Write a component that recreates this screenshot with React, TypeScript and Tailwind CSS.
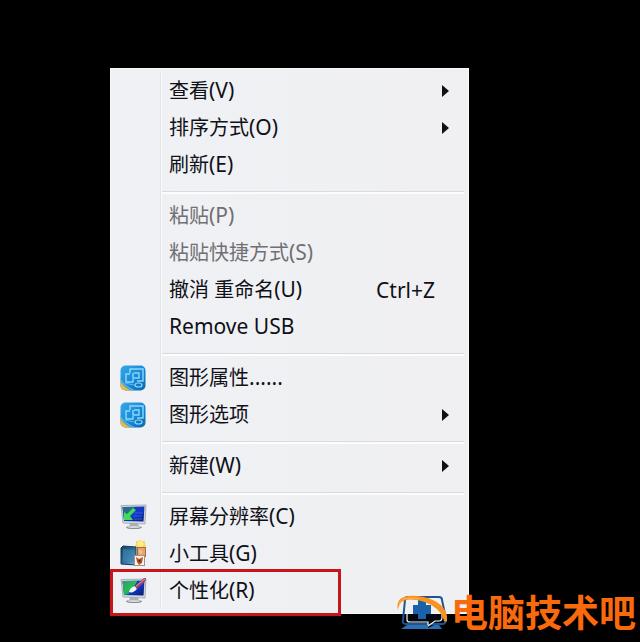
import type { ReactNode } from "react";

type MenuItem = {
  label: string;
  accessKey?: string;
  icon?: ReactNode;
  shortcut?: string;
  submenu?: boolean;
  disabled?: boolean;
  highlighted?: boolean;
};

const GraphicsIcon = () => (
  <svg viewBox="0 0 26 26" className="size-[26px]" aria-hidden="true">
    <defs>
      <linearGradient id="graphicsBlue" x1="0" y1="0" x2="1" y2="1">
        <stop offset="0" stopColor="#3aa9e6" />
        <stop offset="0.55" stopColor="#1489da" />
        <stop offset="1" stopColor="#0a66ad" />
      </linearGradient>
      <clipPath id="graphicsClip">
        <rect x="0.5" y="0.5" width="25" height="25" rx="5" />
      </clipPath>
    </defs>
    <g clipPath="url(#graphicsClip)">
      <rect width="26" height="26" fill="url(#graphicsBlue)" />
      <path d="M0 15C2 20 6 23 12 26H0Z" fill="#e9b948" />
      <path d="M0 14C3 20 8 23 15 26" fill="none" stroke="#5fb4e4" strokeWidth="1.5" />
    </g>
    <g fill="none" stroke="#8fd8f8" strokeWidth="1.4">
      <path d="M10 8V4H23V16H17" />
      <path d="M14 8H19V13H13V8M10 9H6V17H13V14" />
      <path d="M5 18L14 20" stroke="#5fb8ea" strokeWidth="1.2" />
      <ellipse cx="18.500" cy="20" rx="3.5" ry="2" strokeWidth="1.2" />
    </g>
  </svg>
);

const Monitor = ({ children }: { children: ReactNode }) => (
  <svg viewBox="0 0 27 27" className="size-[27px]" aria-hidden="true">
    <defs>
      <linearGradient id="screenBlue" x1="0" y1="0" x2="1" y2="1">
        <stop offset="0" stopColor="#1a3a9e" />
        <stop offset="0.55" stopColor="#1537c8" />
        <stop offset="1" stopColor="#071b70" />
      </linearGradient>
      <linearGradient id="screenGreen" x1="0" y1="0" x2="1" y2="1">
        <stop offset="0" stopColor="#3a8f86" />
        <stop offset="0.5" stopColor="#22c04d" />
        <stop offset="1" stopColor="#1452a8" />
      </linearGradient>
    </defs>
    <path d="M10 20H18L19 24H9Z" fill="#aab0b5" />
    <ellipse cx="14" cy="24.5" rx="8" ry="1.6" fill="#888f95" />
    <ellipse cx="14" cy="24" rx="6.5" ry="1" fill="#d5d9db" />
    <path d="M1 2.5L26 2L25 21L3 20Z" fill="#d3d8dd" stroke="#9da4ab" strokeWidth="0.8" />
    {children}
  </svg>
);

const ResolutionIcon = () => (
  <Monitor>
    <path d="M2.5 4L24.5 3.5L23.5 18.5L4 18Z" fill="url(#screenBlue)" />
    <path d="M2.5 4H15L4 16Z" fill="#2a6a8c" />
    <path d="M4 9L7 11L13 5L16 7L10 13L13 17L4 17Z" fill="#3fdc5a" />
    <path d="M14 10H23M13 13H22M14 16H22" stroke="#2d5fe6" />
  </Monitor>
);

const PersonalizeIcon = () => (
  <Monitor>
    <path d="M2.5 4L24.5 3.5L23.5 18.5L4 18Z" fill="url(#screenBlue)" />
    <path d="M2.5 4H17C16 10 10 10 9 17L4 18Z" fill="url(#screenGreen)" />
    <path d="M9 15C10 11 12 10 15 9L17 12C14 15 12 16 9 15Z" fill="#f4f7fc" />
    <path d="M15 9L24 1L26 1L25.500 4L17 12Z" fill="#a04468" />
    <path d="M16 9L25 2" stroke="#d79ab0" />
  </Monitor>
);

const GadgetsIcon = () => (
  <svg viewBox="0 0 27 27" className="size-[27px]" aria-hidden="true">
    <defs>
      <linearGradient id="gadgetPanel" x1="0" y1="0" x2="1" y2="1">
        <stop offset="0" stopColor="#173e5b" />
        <stop offset="0.45" stopColor="#296895" />
        <stop offset="1" stopColor="#6fb0d6" />
      </linearGradient>
    </defs>
    <path d="M20 0L22 1L25 1L25 4L26 6L24 8H17L15 6L16 4L16 1L18 1Z" fill="#f3d955" />
    <circle cx="20.500" cy="4" r="3" fill="#ffed8b" />
    <path d="M1 8L3 6L16 7V25L1 24Z" fill="url(#gadgetPanel)" stroke="#173a53" />
    <path d="M3 9L14 10V22L3 21Z" fill="#4389b4" opacity="0.6" />
    <rect x="17.500" y="7.500" width="8" height="9" fill="#e3a46d" stroke="#b06a3a" />
    <path d="M19 9L23 12L20 15Z" fill="#f6c489" />
    <rect x="14.500" y="15.500" width="10" height="10" fill="#fff6e9" stroke="#a8917c" />
    <path d="M16 17L19 19L23 17L22 23L19 25L17 22Z" fill="#b5512b" />
    <circle cx="19.500" cy="21" r="1" fill="#39251d" />
  </svg>
);

const BrandLogo = () => (
  <svg viewBox="0 0 57 50" className="h-[50px] w-[57px]" aria-hidden="true">
    <path d="M14 9H45Q48 9 48 12L52 31Q52 36 48 36H12Q8 36 9 32L11 12Q11 9 14 9Z" fill="none" stroke="#1d5592" strokeWidth="2" />
    <path d="M13 26V32Q13 34 16 34H34V38L41 33H45Q48 33 48 29V26" fill="#04080e" stroke="#f3f7fb" strokeWidth="1.2" />
    <path d="M24 12H32V17H37V26H32V31H24V26H19V17H24Z" fill="#1b62ab" />
    <path d="M13 37H34V40L40 37H45L48 41H7Z" fill="#2a70b4" />
    <path d="M4 22C1 11 10 7 22 8C40 9 55 19 53 33C52 34 51 34 50 33C48 22 36 14 22 12C11 10 5 13 4 22Z" fill="#f7931e" />
    <path d="M5 16C7 10 15 9 25 11" fill="none" stroke="#ffb950" />
  </svg>
);

const groups: MenuItem[][] = [
  [
    { label: "查看", accessKey: "(V)", submenu: true },
    { label: "排序方式", accessKey: "(O)", submenu: true },
    { label: "刷新", accessKey: "(E)" },
  ],
  [
    { label: "粘贴", accessKey: "(P)", disabled: true },
    { label: "粘贴快捷方式", accessKey: "(S)", disabled: true },
    { label: "撤消 重命名", accessKey: "(U)", shortcut: "Ctrl+Z" },
    { label: "", accessKey: "Remove USB" },
  ],
  [
    { label: "图形属性", accessKey: "......", icon: <GraphicsIcon /> },
    { label: "图形选项", icon: <GraphicsIcon />, submenu: true },
  ],
  [{ label: "新建", accessKey: "(W)", submenu: true }],
  [
    { label: "屏幕分辨率", accessKey: "(C)", icon: <ResolutionIcon /> },
    { label: "小工具", accessKey: "(G)", icon: <GadgetsIcon /> },
    { label: "个性化", accessKey: "(R)", icon: <PersonalizeIcon />, highlighted: true },
  ],
];

function MenuRow({ item }: { item: MenuItem }) {
  return (
    <li className="relative">
      <button
        type="button"
        disabled={item.disabled}
        className={`flex h-[37px] w-full items-center text-left text-[20px] leading-6 whitespace-nowrap ${
          item.disabled ? "text-[#707074]" : "text-[#101018]"
        }`}
      >
        <span className="w-[59px] shrink-0 pl-[10px]">{item.icon}</span>
        <span className="flex-1">
          {item.label}
          <span className="text-[21px]">{item.accessKey}</span>
        </span>
        {item.shortcut && <span className="pr-[34px] text-[21px]">{item.shortcut}</span>}
        {item.submenu && (
          <svg viewBox="0 0 7 12" className="mr-5 h-3 w-[7px]" aria-hidden="true">
            <path d="M0 0L7 6L0 12Z" fill="#101018" />
          </svg>
        )}
      </button>
      {item.highlighted && (
        <span className="pointer-events-none absolute -top-[3px] left-0 h-[47px] w-[231px] border-3 border-[#c7161b]" />
      )}
    </li>
  );
}

export default function App() {
  return (
    <main className="relative min-h-screen overflow-hidden bg-black pt-[68px] pr-[171px] pl-[110px] font-['Noto_Sans','Noto_Sans_CJK_SC',sans-serif]">
      <nav className="flex flex-col border border-[#f8f8f9] bg-linear-to-r from-[#eff1f4] to-[#f0f0f2] pt-[3px] pb-1">
        <div className="-mx-px bg-[linear-gradient(#e2e4e8,#e2e4e8),linear-gradient(#fafafb,#fafafb)] bg-[length:1px_100%,1px_100%] bg-[position:50px_0,51px_0] bg-no-repeat">
          {groups.map((group, index) => (
            <div key={index}>
              {index > 0 && (
                <div className="h-[14px] pt-2 pr-[5px] pl-[52px]">
                  <hr className="h-[3px] border-0 border-t border-[#d9dade] bg-[#fcfcfd]" />
                </div>
              )}
              <ul>
                {group.map((item) => (
                  <MenuRow key={item.label} item={item} />
                ))}
              </ul>
            </div>
          ))}
        </div>
      </nav>

      {/* Site watermark */}
      <div className="absolute right-1 bottom-1 flex items-center">
        <BrandLogo />
        <span className="pb-1 font-['Noto_Sans_CJK_SC',sans-serif] text-[37px] leading-[42px] font-bold text-[#f86a0b]">
          电脑技术吧
        </span>
      </div>
    </main>
  );
}
